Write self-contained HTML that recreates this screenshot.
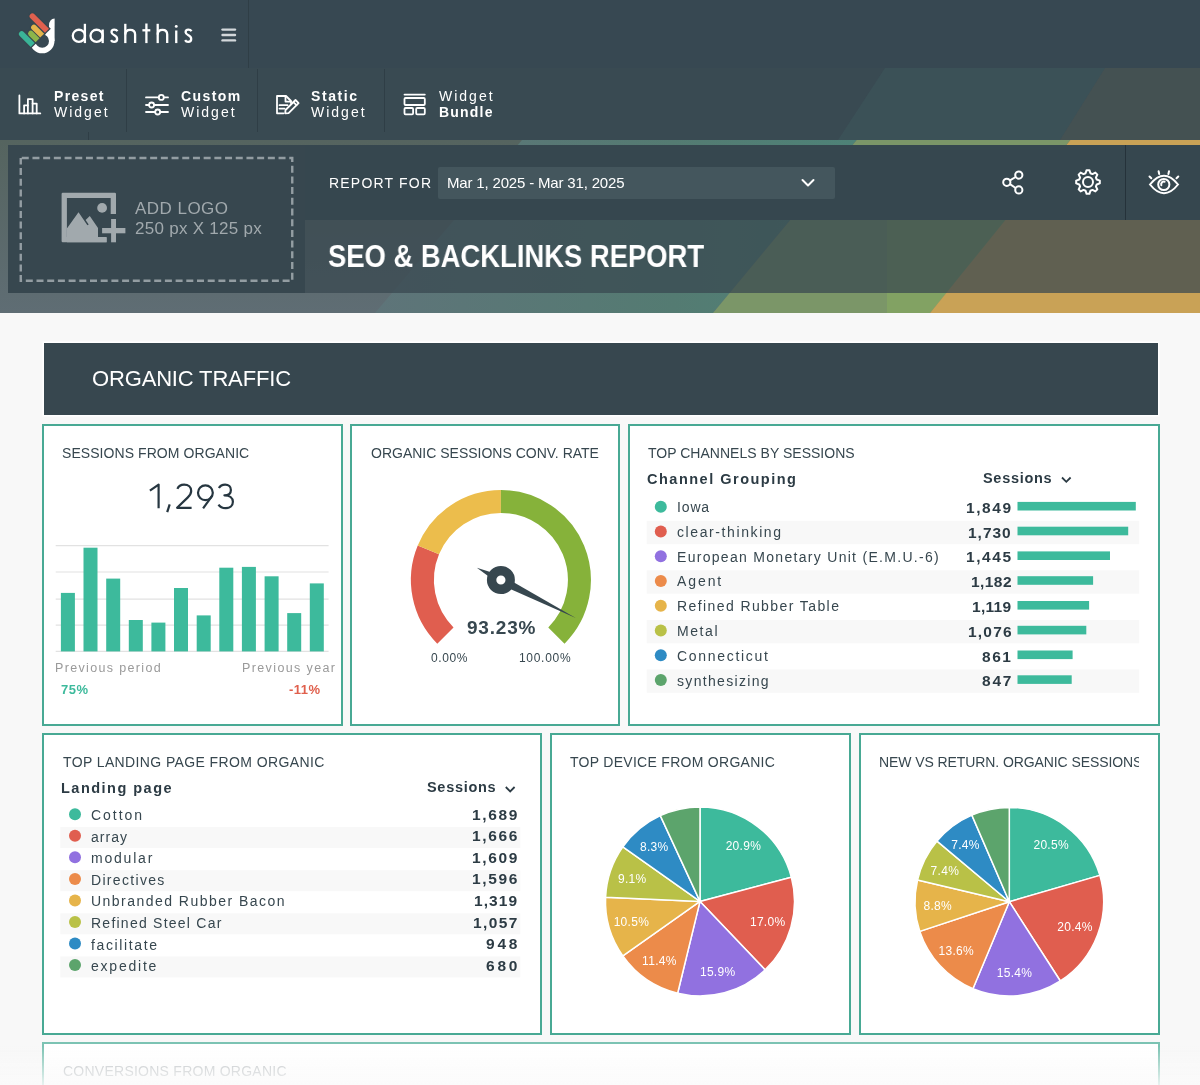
<!DOCTYPE html>
<html><head><meta charset="utf-8">
<style>
*{margin:0;padding:0;box-sizing:border-box}
html,body{width:1200px;height:1085px;overflow:hidden}
body{background:#f8f8f8;font-family:"Liberation Sans",sans-serif;position:relative;color:#37474f}
.abs{position:absolute}
.txt{position:absolute;white-space:nowrap;line-height:1;will-change:transform}
#banner{left:0;top:0;width:1200px;height:313px}
.nav1{left:0;top:0;width:1200px;height:68px;background:#374852}
.nav2{left:0;top:68px;width:1200px;height:72px;background:#394a52}
.vdiv{position:absolute;width:1px;background:#2f3e46}
.tb{color:#fff;font-size:14px}
.rep{left:8px;top:145px;width:1192px;height:75px;background:#36474f}
.logobox{left:8px;top:145px;width:297px;height:148px;background:#37474f}
.titlerow{left:305px;top:220px;width:895px;height:73px;background:rgba(55,71,79,0.72)}
.section{left:44px;top:343px;width:1114px;height:72px;background:#37474f;box-shadow:0 0 0 1.5px #fff}
.w{position:absolute;background:#fff;border:2px solid #48a994}
.wt{font-size:14px;color:#37474f;letter-spacing:0.2px}
</style></head><body>

<svg id="banner" class="abs" width="1200" height="313" viewBox="0 0 1200 313">
  <defs>
    <linearGradient id="gb" x1="0" y1="0" x2="0" y2="1">
      <stop offset="0" stop-color="#4e5e58"/>
      <stop offset="0.45" stop-color="#55645f"/>
      <stop offset="1" stop-color="#5f6d74"/>
    </linearGradient>
    <linearGradient id="gt" gradientUnits="userSpaceOnUse" x1="375" y1="0" x2="973" y2="0">
      <stop offset="0" stop-color="#5e7479"/>
      <stop offset="0.5" stop-color="#547b72"/>
      <stop offset="1" stop-color="#4a877b"/>
    </linearGradient>
  </defs>
  <rect x="0" y="0" width="1200" height="313" fill="url(#gb)"/>
  <polygon points="641,0 973,0 713,313 375,313" fill="url(#gt)"/>
  <polygon points="973,0 1184,0 930,313 713,313" fill="#7b9668"/>
  <polygon points="887,200 1024,200 930,313 887,313" fill="#82a263"/>
  <polygon points="1184,0 1500,0 1500,313 930,313" fill="#c9a256"/>
</svg>

<div class="abs nav1"></div>
<div class="abs nav2"></div>
<svg class="abs" style="left:0;top:68px" width="1200" height="72" viewBox="0 68 1200 72"><polygon points="885,68 1105,68 1060,140 838,140" fill="rgba(74,135,123,0.13)"/><polygon points="1105,68 1200,68 1200,140 1060,140" fill="rgba(201,162,86,0.08)"/></svg>
<div class="abs rep"></div>
<div class="abs logobox"></div>
<div class="abs titlerow"></div>

<!-- top nav -->
<svg class="abs" style="left:14px;top:8px" width="46" height="50" viewBox="14 8 46 50">
<circle cx="42.20" cy="41.00" r="9.55" stroke="#fff" stroke-width="5.50" fill="none"/>
<path d="M49 41 V25.5 Q49.2 18.6 54.6 18.4 V41 Z" fill="#fff"/>
<path d="M35.33 13.32 L50.81 28.81 L45.01 34.61 L29.53 19.12 A4.10 4.10 0 0 1 35.33 13.32 Z" fill="#37474f"/>
<path d="M36.84 24.54 L45.96 33.66 L40.16 39.46 L31.04 30.33 A4.10 4.10 0 0 1 36.84 24.54 Z" fill="#37474f"/>
<path d="M33.68 30.53 L41.39 38.23 L35.59 44.03 L27.88 36.32 A4.10 4.10 0 0 1 33.68 30.53 Z" fill="#37474f"/>
<path d="M24.61 31.11 L36.56 43.06 L30.76 48.86 L18.81 36.91 A4.10 4.10 0 0 1 24.61 31.11 Z" fill="#37474f"/>
<path d="M34.41 14.24 L48.97 28.81 L45.01 32.77 L30.45 18.20 A2.80 2.80 0 0 1 34.41 14.24 Z" fill="#e0604e"/>
<path d="M35.92 25.46 L44.12 33.66 L40.16 37.62 L31.96 29.42 A2.80 2.80 0 0 1 35.92 25.46 Z" fill="#e3b44b"/>
<path d="M32.76 31.45 L39.55 38.23 L35.59 42.19 L28.80 35.40 A2.80 2.80 0 0 1 32.76 31.45 Z" fill="#8db54a"/>
<path d="M23.69 32.03 L34.72 43.06 L30.76 47.02 L19.73 35.99 A2.80 2.80 0 0 1 23.69 32.03 Z" fill="#3ab497"/>
</svg>
<svg class="abs" style="left:66px;top:18px" width="132" height="30" viewBox="66 18 132 30">
<g stroke="#fff" stroke-width="2.3" fill="none">
<circle cx="78.9" cy="35.85" r="6.1"/><line x1="84.9" y1="23.8" x2="84.9" y2="43.1"/>
<circle cx="96.6" cy="35.85" r="6.1"/><line x1="102.7" y1="29.5" x2="102.7" y2="43.1"/>
<path d="M 117.40 31.20 C 116.80 30.10 115.70 29.70 114.30 29.70 C 112.60 29.70 111.50 30.70 111.50 32.20 C 111.50 33.80 112.90 34.50 114.40 35.30 C 116.10 36.20 117.10 37.20 117.10 39.10 C 117.10 40.90 115.80 41.90 114.10 41.90 C 112.70 41.90 111.60 41.20 111.00 40.10"/>
<line x1="125.3" y1="23.8" x2="125.3" y2="43.1"/><path d="M125.3 34.5 C125.3 31.3 127.3 29.8 130.2 29.8 C133.1 29.8 135.1 31.5 135.1 34.6 V43.1"/>
<line x1="146.4" y1="23.5" x2="146.4" y2="43.1"/><line x1="142.4" y1="30.3" x2="150.3" y2="30.3"/>
<line x1="157.7" y1="23.8" x2="157.7" y2="43.1"/><path d="M157.7 34.5 C157.7 31.3 159.7 29.8 162.5 29.8 C165.3 29.8 167.2 31.5 167.2 34.6 V43.1"/>
<line x1="176.25" y1="30.5" x2="176.25" y2="43.1"/>
<path d="M 191.50 31.20 C 190.90 30.10 189.80 29.70 188.40 29.70 C 186.70 29.70 185.60 30.70 185.60 32.20 C 185.60 33.80 187.00 34.50 188.50 35.30 C 190.20 36.20 191.20 37.20 191.20 39.10 C 191.20 40.90 189.90 41.90 188.20 41.90 C 186.80 41.90 185.70 41.20 185.10 40.10"/>
</g>
<circle cx="176.25" cy="26.4" r="1.45" fill="#fff"/>
</svg>
<svg class="abs" style="left:221px;top:28px" width="16" height="15" viewBox="0 0 16 15">
  <g stroke="#d3d8db" stroke-width="2.4" stroke-linecap="round"><line x1="1.5" y1="1.6" x2="14" y2="1.6"/><line x1="1.5" y1="7" x2="14" y2="7"/><line x1="1.5" y1="12.4" x2="14" y2="12.4"/></g>
</svg>
<div class="vdiv" style="left:248px;top:0;height:68px"></div>

<!-- toolbar -->
<svg class="abs" style="left:16px;top:92px" width="28" height="26" viewBox="16 92 28 26">
  <g stroke="#fff" stroke-width="1.8" fill="none" stroke-linecap="round" stroke-linejoin="round">
    <path d="M19.4 95.4 V113.4 H40.3"/>
    <path d="M24.1 113.4 V105.3 H27.9 V113.4"/>
    <path d="M27.9 105.3 V99.2 H32.6 V113.4"/>
    <path d="M32.6 103.6 H36.7 V113.4"/>
  </g>
</svg>
<div class="txt tb" style="left:53.5px;top:88.5px;font-weight:bold;letter-spacing:1.34px">Preset</div>
<div class="txt tb" style="left:53.7px;top:104.7px;letter-spacing:2px">Widget</div>
<div class="vdiv" style="left:126px;top:69px;height:63px"></div>
<div class="vdiv" style="left:88px;top:132px;height:8px"></div>

<svg class="abs" style="left:142px;top:90px" width="30" height="26" viewBox="142 90 30 26">
  <g stroke="#fff" stroke-width="1.8" fill="none" stroke-linecap="round">
    <line x1="146" y1="97.4" x2="158.8" y2="97.4"/><line x1="163.8" y1="97.4" x2="168" y2="97.4"/>
    <circle cx="161.3" cy="97.4" r="2.5"/>
    <line x1="146" y1="105" x2="149.1" y2="105"/><line x1="154.1" y1="105" x2="168" y2="105"/>
    <circle cx="151.6" cy="105" r="2.5"/>
    <line x1="146" y1="112" x2="155.2" y2="112"/><line x1="160.2" y1="112" x2="168" y2="112"/>
    <circle cx="157.7" cy="112" r="2.5"/>
  </g>
</svg>
<div class="txt tb" style="left:180.5px;top:88.5px;font-weight:bold;letter-spacing:1.4px">Custom</div>
<div class="txt tb" style="left:181px;top:104.7px;letter-spacing:2px">Widget</div>
<div class="vdiv" style="left:257px;top:69px;height:63px"></div>

<svg class="abs" style="left:272px;top:90px" width="32" height="28" viewBox="272 90 32 28">
  <g stroke="#fff" stroke-width="1.8" fill="none" stroke-linejoin="round" stroke-linecap="round">
    <path d="M283.5 113.3 H277 V96 H286 L291 101 V103"/>
    <path d="M285.5 96.2 V101.6 H290.8"/>
    <line x1="279.5" y1="105.2" x2="287.5" y2="105.2"/>
    <line x1="279.5" y1="108.6" x2="284.5" y2="108.6"/>
    <path d="M285.2 113.4 L285.5 110 L295.5 100 L298.6 103.1 L288.6 113.1 Z"/>
    <line x1="293.4" y1="102.1" x2="296.5" y2="105.2"/>
  </g>
</svg>
<div class="txt tb" style="left:311px;top:88.5px;font-weight:bold;letter-spacing:1.6px">Static</div>
<div class="txt tb" style="left:311px;top:104.7px;letter-spacing:2px">Widget</div>
<div class="vdiv" style="left:384px;top:69px;height:63px"></div>

<svg class="abs" style="left:400px;top:90px" width="30" height="28" viewBox="400 90 30 28">
  <g stroke="#fff" stroke-width="1.8" fill="none" stroke-linecap="round" stroke-linejoin="round">
    <line x1="404.5" y1="94.6" x2="424.8" y2="94.6"/>
    <rect x="404.5" y="98" width="20.3" height="7" rx="1"/>
    <rect x="404.5" y="108" width="8.6" height="6.3" rx="1"/>
    <rect x="416.2" y="108" width="8.6" height="6.3" rx="1"/>
  </g>
</svg>
<div class="txt tb" style="left:438.5px;top:89px;letter-spacing:2px">Widget</div>
<div class="txt tb" style="left:438.5px;top:104.7px;font-weight:bold;letter-spacing:1.2px">Bundle</div>

<!-- report header -->
<svg class="abs" style="left:0;top:140px" width="310" height="160" viewBox="0 140 310 160"><rect x="20.75" y="158" width="271.5" height="122.75" fill="none" stroke="#939da2" stroke-width="2.4" stroke-dasharray="7 3.7" stroke-dashoffset="-1"/></svg>
<svg class="abs" style="left:58px;top:188px" width="72" height="58" viewBox="58 188 72 58">
  <g fill="#a1a9ad">
    <path d="M61.6 194 Q61.6 192.8 62.8 192.8 H114.8 Q116 192.8 116 194 V214 H110.7 V198.1 H66.9 V237 H106.6 V242.3 H62.8 Q61.6 242.3 61.6 241.1 Z"/>
    <circle cx="102.1" cy="207.9" r="4.9"/>
    <path d="M66.9 228.4 L78.5 212.3 L87.4 225.2 L88.7 224.4 L85.6 219.9 L89.8 216 L98 228 V237.5 H106.6 V242.3 H66.9 Z"/>
    <rect x="111.1" y="219" width="4.9" height="23.3"/>
    <rect x="102.1" y="228" width="23.3" height="5.3"/>
  </g>
</svg>
<div class="txt" style="left:135px;top:200px;font-size:17px;color:#a1a9ad;letter-spacing:0.47px">ADD LOGO</div>
<div class="txt" style="left:134.5px;top:219.5px;font-size:17px;color:#a1a9ad;letter-spacing:0.27px">250 px X 125 px</div>

<div class="txt" style="left:329px;top:176px;font-size:14px;color:#fff;letter-spacing:1.2px">REPORT FOR</div>
<div class="abs" style="left:438px;top:167px;width:397px;height:32px;background:#44565d;border-radius:2px"></div>
<div class="txt" style="left:446.5px;top:175px;font-size:15px;color:#fff;letter-spacing:-0.17px">Mar 1, 2025 - Mar 31, 2025</div>
<svg class="abs" style="left:800px;top:176px" width="16" height="14" viewBox="0 0 16 14"><path d="M2.5 4 L8 9.5 L13.5 4" stroke="#fff" stroke-width="2" fill="none" stroke-linecap="round" stroke-linejoin="round"/></svg>

<svg class="abs" style="left:995px;top:165px" width="35" height="35" viewBox="995 165 35 35">
  <g stroke="#fff" stroke-width="2" fill="none">
    <circle cx="1006.8" cy="182.3" r="3.6"/>
    <circle cx="1018.8" cy="175.1" r="3.6"/>
    <circle cx="1018.8" cy="189.9" r="3.6"/>
    <line x1="1010" y1="180.4" x2="1015.6" y2="177"/>
    <line x1="1010" y1="184.2" x2="1015.6" y2="188"/>
  </g>
</svg>
<svg class="abs" style="left:1066.7px;top:161.3px" width="42" height="42" viewBox="-21 -21 42 42">
  <g stroke="#fff" stroke-width="2" fill="none" stroke-linejoin="round">
    <path d="M-2.43 -8.77 L-1.42 -11.81 L1.42 -11.81 L2.43 -8.77 L4.49 -7.92 L7.35 -9.36 L9.36 -7.35 L7.92 -4.49 L8.77 -2.43 L11.81 -1.42 L11.81 1.42 L8.77 2.43 L7.92 4.49 L9.36 7.35 L7.35 9.36 L4.49 7.92 L2.43 8.77 L1.42 11.81 L-1.42 11.81 L-2.43 8.77 L-4.49 7.92 L-7.35 9.36 L-9.36 7.35 L-7.92 4.49 L-8.77 2.43 L-11.81 1.42 L-11.81 -1.42 L-8.77 -2.43 L-7.92 -4.49 L-9.36 -7.35 L-7.35 -9.36 L-4.49 -7.92 Z"/>
    <circle cx="0" cy="0" r="5"/>
  </g>
</svg>
<div class="vdiv" style="left:1125px;top:145px;height:75px;background:#25323a"></div>
<svg class="abs" style="left:1145px;top:168px" width="38" height="30" viewBox="1145 168 38 30">
  <g stroke="#fff" stroke-width="2" fill="none" stroke-linecap="round">
    <path d="M1150 184.5 Q1164 167 1178 184.5 Q1164 202 1150 184.5 Z"/>
    <circle cx="1163.8" cy="184.5" r="5.6"/>
    <path d="M1161.3 185.3 A2.8 2.8 0 0 1 1164.6 181.7"/>
    <line x1="1158.6" y1="171.3" x2="1159.2" y2="174"/>
    <line x1="1169" y1="171.3" x2="1168.4" y2="174"/>
    <line x1="1149.5" y1="176.5" x2="1151.3" y2="178.3"/>
    <line x1="1178.3" y1="176.5" x2="1176.5" y2="178.3"/>
  </g>
</svg>

<div class="txt" style="left:327.5px;top:241.2px;font-size:31.5px;color:#fff;font-weight:bold;transform:scaleX(0.87);transform-origin:0 0">SEO &amp; BACKLINKS REPORT</div>

<div class="abs section"></div>
<div class="txt" style="left:92px;top:367.5px;font-size:22px;color:#fff;letter-spacing:-0.16px">ORGANIC TRAFFIC</div>

<!--WIDGETS-->
<div class="w" style="left:42px;top:424px;width:301px;height:302px"></div>
<div class="w" style="left:350px;top:424px;width:270px;height:302px"></div>
<div class="w" style="left:628px;top:424px;width:532px;height:302px"></div>
<div class="w" style="left:42px;top:733px;width:500px;height:302px"></div>
<div class="w" style="left:550px;top:733px;width:301px;height:302px"></div>
<div class="w" style="left:859px;top:733px;width:301px;height:302px"></div>
<svg class="abs" style="left:0;top:0" width="1200" height="1085" viewBox="0 0 1200 1085">
<line x1="55.7" y1="545.7" x2="328.6" y2="545.7" stroke="#e2e2e2" stroke-width="1.2"/>
<line x1="55.7" y1="572.0" x2="328.6" y2="572.0" stroke="#e2e2e2" stroke-width="1.2"/>
<line x1="55.7" y1="599.1" x2="328.6" y2="599.1" stroke="#e2e2e2" stroke-width="1.2"/>
<line x1="55.7" y1="625.1" x2="328.6" y2="625.1" stroke="#e2e2e2" stroke-width="1.2"/>
<line x1="55.7" y1="651.4" x2="328.6" y2="651.4" stroke="#e2e2e2" stroke-width="1.2"/>
<rect x="60.9" y="592.9" width="14" height="58.5" fill="#3dba9c"/>
<rect x="83.5" y="547.7" width="14" height="103.7" fill="#3dba9c"/>
<rect x="106.2" y="578.6" width="14" height="72.8" fill="#3dba9c"/>
<rect x="128.8" y="620.0" width="14" height="31.4" fill="#3dba9c"/>
<rect x="151.4" y="622.6" width="14" height="28.8" fill="#3dba9c"/>
<rect x="174.0" y="588.0" width="14" height="63.4" fill="#3dba9c"/>
<rect x="196.7" y="615.4" width="14" height="36.0" fill="#3dba9c"/>
<rect x="219.3" y="567.7" width="14" height="83.7" fill="#3dba9c"/>
<rect x="241.9" y="566.9" width="14" height="84.5" fill="#3dba9c"/>
<rect x="264.6" y="576.3" width="14" height="75.1" fill="#3dba9c"/>
<rect x="287.2" y="613.1" width="14" height="38.3" fill="#3dba9c"/>
<rect x="309.8" y="583.4" width="14" height="68.0" fill="#3dba9c"/>
<path d="M445.39 635.51 A78.50 78.50 0 0 1 428.38 549.96" stroke="#e05e4f" stroke-width="23" fill="none"/>
<path d="M428.38 549.96 A78.50 78.50 0 0 1 500.90 501.50" stroke="#ecbd4c" stroke-width="23" fill="none"/>
<path d="M500.90 501.50 A78.50 78.50 0 0 1 556.41 635.51" stroke="#86b23a" stroke-width="23" fill="none"/>
<path d="M476.83 567.77 L498.91 583.92 L575.79 618.04 L502.89 576.08 Z" fill="#37474f"/>
<circle cx="500.9" cy="580.0" r="9.3" stroke="#37474f" stroke-width="9.4" fill="#fff"/>
<path d="M1062 477.5 L1066.3 481.8 L1070.6 477.5" stroke="#2c3b44" stroke-width="1.8" fill="none"/>
<circle cx="660.8" cy="506.7" r="6" fill="#3dba9c"/>
<rect x="1017.5" y="501.9" width="118.3" height="8.6" fill="#3dba9c"/>
<rect x="646.7" y="520.8" width="492.5" height="23.4" fill="#f8f8f8"/>
<circle cx="660.8" cy="531.5" r="6" fill="#e05e4f"/>
<rect x="1017.5" y="526.7" width="110.7" height="8.6" fill="#3dba9c"/>
<circle cx="660.8" cy="556.2" r="6" fill="#9171e0"/>
<rect x="1017.5" y="551.4" width="92.5" height="8.6" fill="#3dba9c"/>
<rect x="646.7" y="570.3" width="492.5" height="23.4" fill="#f8f8f8"/>
<circle cx="660.8" cy="581.0" r="6" fill="#ec8b4a"/>
<rect x="1017.5" y="576.2" width="75.6" height="8.6" fill="#3dba9c"/>
<circle cx="660.8" cy="605.8" r="6" fill="#e6b44a"/>
<rect x="1017.5" y="601.0" width="71.6" height="8.6" fill="#3dba9c"/>
<rect x="646.7" y="619.9" width="492.5" height="23.4" fill="#f8f8f8"/>
<circle cx="660.8" cy="630.5" r="6" fill="#b9c147"/>
<rect x="1017.5" y="625.8" width="68.8" height="8.6" fill="#3dba9c"/>
<circle cx="660.8" cy="655.3" r="6" fill="#2e8bc4"/>
<rect x="1017.5" y="650.5" width="55.1" height="8.6" fill="#3dba9c"/>
<rect x="646.7" y="669.4" width="492.5" height="23.4" fill="#f8f8f8"/>
<circle cx="660.8" cy="680.1" r="6" fill="#5ca46c"/>
<rect x="1017.5" y="675.3" width="54.2" height="8.6" fill="#3dba9c"/>
<path d="M505.8 787 L510.2 791.4 L514.6 787" stroke="#2c3b44" stroke-width="1.8" fill="none"/>
<circle cx="75" cy="814.2" r="6" fill="#3dba9c"/>
<rect x="60.3" y="827.1" width="460" height="21" fill="#f8f8f8"/>
<circle cx="75" cy="835.8" r="6" fill="#e05e4f"/>
<circle cx="75" cy="857.3" r="6" fill="#9171e0"/>
<rect x="60.3" y="870.2" width="460" height="21" fill="#f8f8f8"/>
<circle cx="75" cy="878.9" r="6" fill="#ec8b4a"/>
<circle cx="75" cy="900.4" r="6" fill="#e6b44a"/>
<rect x="60.3" y="913.3" width="460" height="21" fill="#f8f8f8"/>
<circle cx="75" cy="922.0" r="6" fill="#b9c147"/>
<circle cx="75" cy="943.6" r="6" fill="#2e8bc4"/>
<rect x="60.3" y="956.4" width="460" height="21" fill="#f8f8f8"/>
<circle cx="75" cy="965.1" r="6" fill="#5ca46c"/>
<path d="M700.00 901.40 L700.00 806.90 A94.50 94.50 0 0 1 791.38 877.32 Z" fill="#3dba9c" stroke="#fff" stroke-width="1.5" stroke-linejoin="round"/>
<path d="M700.00 901.40 L791.38 877.32 A94.50 94.50 0 0 1 765.12 969.88 Z" fill="#e05e4f" stroke="#fff" stroke-width="1.5" stroke-linejoin="round"/>
<path d="M700.00 901.40 L765.12 969.88 A94.50 94.50 0 0 1 677.65 993.22 Z" fill="#9171e0" stroke="#fff" stroke-width="1.5" stroke-linejoin="round"/>
<path d="M700.00 901.40 L677.65 993.22 A94.50 94.50 0 0 1 622.86 955.98 Z" fill="#ec8b4a" stroke="#fff" stroke-width="1.5" stroke-linejoin="round"/>
<path d="M700.00 901.40 L622.86 955.98 A94.50 94.50 0 0 1 605.59 897.25 Z" fill="#e6b44a" stroke="#fff" stroke-width="1.5" stroke-linejoin="round"/>
<path d="M700.00 901.40 L605.59 897.25 A94.50 94.50 0 0 1 622.86 846.82 Z" fill="#b9c147" stroke="#fff" stroke-width="1.5" stroke-linejoin="round"/>
<path d="M700.00 901.40 L622.86 846.82 A94.50 94.50 0 0 1 660.30 815.64 Z" fill="#2e8bc4" stroke="#fff" stroke-width="1.5" stroke-linejoin="round"/>
<path d="M700.00 901.40 L660.30 815.64 A94.50 94.50 0 0 1 700.00 806.90 Z" fill="#5ca46c" stroke="#fff" stroke-width="1.5" stroke-linejoin="round"/>
<text x="743.4" y="850.0" text-anchor="middle" font-family="Liberation Sans" font-size="12" fill="#fff" letter-spacing="0.3">20.9%</text>
<text x="767.7" y="925.7" text-anchor="middle" font-family="Liberation Sans" font-size="12" fill="#fff" letter-spacing="0.3">17.0%</text>
<text x="717.7" y="975.7" text-anchor="middle" font-family="Liberation Sans" font-size="12" fill="#fff" letter-spacing="0.3">15.9%</text>
<text x="659.4" y="965.2" text-anchor="middle" font-family="Liberation Sans" font-size="12" fill="#fff" letter-spacing="0.3">11.4%</text>
<text x="631.4" y="925.7" text-anchor="middle" font-family="Liberation Sans" font-size="12" fill="#fff" letter-spacing="0.3">10.5%</text>
<text x="632.3" y="882.9" text-anchor="middle" font-family="Liberation Sans" font-size="12" fill="#fff" letter-spacing="0.3">9.1%</text>
<text x="654.3" y="850.9" text-anchor="middle" font-family="Liberation Sans" font-size="12" fill="#fff" letter-spacing="0.3">8.3%</text>
<path d="M1009.30 901.70 L1009.30 807.40 A94.30 94.30 0 0 1 1099.86 875.39 Z" fill="#3dba9c" stroke="#fff" stroke-width="1.5" stroke-linejoin="round"/>
<path d="M1009.30 901.70 L1099.86 875.39 A94.30 94.30 0 0 1 1060.33 981.00 Z" fill="#e05e4f" stroke="#fff" stroke-width="1.5" stroke-linejoin="round"/>
<path d="M1009.30 901.70 L1060.33 981.00 A94.30 94.30 0 0 1 972.94 988.71 Z" fill="#9171e0" stroke="#fff" stroke-width="1.5" stroke-linejoin="round"/>
<path d="M1009.30 901.70 L972.94 988.71 A94.30 94.30 0 0 1 919.80 931.40 Z" fill="#ec8b4a" stroke="#fff" stroke-width="1.5" stroke-linejoin="round"/>
<path d="M1009.30 901.70 L919.80 931.40 A94.30 94.30 0 0 1 917.54 879.97 Z" fill="#e6b44a" stroke="#fff" stroke-width="1.5" stroke-linejoin="round"/>
<path d="M1009.30 901.70 L917.54 879.97 A94.30 94.30 0 0 1 937.02 841.14 Z" fill="#b9c147" stroke="#fff" stroke-width="1.5" stroke-linejoin="round"/>
<path d="M1009.30 901.70 L937.02 841.14 A94.30 94.30 0 0 1 971.85 815.16 Z" fill="#2e8bc4" stroke="#fff" stroke-width="1.5" stroke-linejoin="round"/>
<path d="M1009.30 901.70 L971.85 815.16 A94.30 94.30 0 0 1 1009.30 807.40 Z" fill="#5ca46c" stroke="#fff" stroke-width="1.5" stroke-linejoin="round"/>
<text x="1051.2" y="849.4" text-anchor="middle" font-family="Liberation Sans" font-size="12" fill="#fff" letter-spacing="0.3">20.5%</text>
<text x="1075.0" y="931.2" text-anchor="middle" font-family="Liberation Sans" font-size="12" fill="#fff" letter-spacing="0.3">20.4%</text>
<text x="1014.5" y="977.3" text-anchor="middle" font-family="Liberation Sans" font-size="12" fill="#fff" letter-spacing="0.3">15.4%</text>
<text x="956.3" y="955.4" text-anchor="middle" font-family="Liberation Sans" font-size="12" fill="#fff" letter-spacing="0.3">13.6%</text>
<text x="937.7" y="910.0" text-anchor="middle" font-family="Liberation Sans" font-size="12" fill="#fff" letter-spacing="0.3">8.8%</text>
<text x="944.9" y="875.0" text-anchor="middle" font-family="Liberation Sans" font-size="12" fill="#fff" letter-spacing="0.3">7.4%</text>
<text x="965.5" y="848.8" text-anchor="middle" font-family="Liberation Sans" font-size="12" fill="#fff" letter-spacing="0.3">7.4%</text>
</svg>
<div class="txt" style="left:62.00px;top:445.65px;font-size:14px;color:#37474f;letter-spacing:0.066px;">SESSIONS FROM ORGANIC</div>
<svg class="abs" style="left:140px;top:478px" width="100" height="40" viewBox="140 478 100 40"><g stroke="#263640" stroke-width="2.2" fill="none" stroke-linejoin="round"><path d="M149.9 490.6 L158.6 484.6 V508.2"/><path d="M169.7 504.3 L167.2 512.2"/><path d="M177.4 488.8 C178.5 486 180.9 484.6 184.1 484.6 C188.4 484.6 191.2 487.2 191.2 490.9 C191.2 493.5 189.9 495.3 187.6 497.6 L177.1 507.8 H191.6"/><circle cx="205.4" cy="492.7" r="7.4"/><path d="M212.3 495.6 L203.1 508.3"/><path d="M218.9 488.1 C220.1 485.8 222.2 484.6 225.1 484.6 C228.7 484.6 230.9 486.8 230.9 489.9 C230.9 493.3 228.3 495.3 224.4 495.3 C229.6 495.3 232.9 497.9 232.9 501.7 C232.9 505.6 229.9 508.2 225.7 508.2 C222.4 508.2 219.9 506.9 218.5 504.6"/></g></svg>
<div class="txt" style="left:54.5px;top:661.5px;font-size:12.5px;color:#9a9a9a;letter-spacing:1.35px">Previous period</div>
<div class="txt" style="left:241.5px;top:661.5px;font-size:12.5px;color:#9a9a9a;letter-spacing:1.38px">Previous year</div>
<div class="txt" style="left:61.0px;top:683.0px;font-size:13px;color:#3dba9c;font-weight:bold;letter-spacing:0.5px">75%</div>
<div class="txt" style="left:289.0px;top:683.0px;font-size:13px;color:#e0604d;font-weight:bold;letter-spacing:0.5px">-11%</div>
<div class="txt" style="left:371.00px;top:445.65px;font-size:14px;color:#37474f;letter-spacing:0.000px;">ORGANIC SESSIONS CONV. RATE</div>
<div class="txt" style="left:467.0px;top:618.0px;font-size:19px;color:#37474f;font-weight:bold;letter-spacing:0.8px">93.23%</div>
<div class="txt" style="left:431.0px;top:651.5px;font-size:12px;color:#37474f;letter-spacing:0.6px">0.00%</div>
<div class="txt" style="left:518.5px;top:651.5px;font-size:12px;color:#37474f;letter-spacing:0.7px">100.00%</div>
<div class="txt" style="left:648.40px;top:445.65px;font-size:14px;color:#37474f;letter-spacing:0.020px;">TOP CHANNELS BY SESSIONS</div>
<div class="txt" style="left:646.5px;top:472.0px;font-size:14.5px;color:#2c3b44;font-weight:bold;letter-spacing:1.5px">Channel Grouping</div>
<div class="txt" style="left:983.0px;top:471.0px;font-size:14.5px;color:#2c3b44;font-weight:bold;letter-spacing:0.7px">Sessions</div>
<div class="txt" style="left:677.30px;top:500.15px;font-size:14px;color:#37474f;letter-spacing:0.858px;">Iowa</div>
<div class="txt" style="left:966.10px;top:499.88px;font-size:15.5px;color:#2c3b44;letter-spacing:1.562px;font-weight:bold;">1,849</div>
<div class="txt" style="left:677.30px;top:524.92px;font-size:14px;color:#37474f;letter-spacing:1.596px;">clear-thinking</div>
<div class="txt" style="left:968.40px;top:524.65px;font-size:15.5px;color:#2c3b44;letter-spacing:0.988px;font-weight:bold;">1,730</div>
<div class="txt" style="left:677.30px;top:549.69px;font-size:14px;color:#37474f;letter-spacing:1.298px;">European Monetary Unit (E.M.U.-6)</div>
<div class="txt" style="left:966.10px;top:549.42px;font-size:15.5px;color:#2c3b44;letter-spacing:1.562px;font-weight:bold;">1,445</div>
<div class="txt" style="left:677.30px;top:574.46px;font-size:14px;color:#37474f;letter-spacing:1.919px;">Agent</div>
<div class="txt" style="left:970.60px;top:574.19px;font-size:15.5px;color:#2c3b44;letter-spacing:0.438px;font-weight:bold;">1,182</div>
<div class="txt" style="left:677.30px;top:599.23px;font-size:14px;color:#37474f;letter-spacing:1.408px;">Refined Rubber Table</div>
<div class="txt" style="left:972.10px;top:598.96px;font-size:15.5px;color:#2c3b44;letter-spacing:0.281px;font-weight:bold;">1,119</div>
<div class="txt" style="left:677.30px;top:624.00px;font-size:14px;color:#37474f;letter-spacing:1.588px;">Metal</div>
<div class="txt" style="left:967.50px;top:623.73px;font-size:15.5px;color:#2c3b44;letter-spacing:1.213px;font-weight:bold;">1,076</div>
<div class="txt" style="left:677.30px;top:648.77px;font-size:14px;color:#37474f;letter-spacing:1.700px;">Connecticut</div>
<div class="txt" style="left:982.20px;top:648.50px;font-size:15.5px;color:#2c3b44;letter-spacing:1.512px;font-weight:bold;">861</div>
<div class="txt" style="left:677.30px;top:673.54px;font-size:14px;color:#37474f;letter-spacing:1.318px;">synthesizing</div>
<div class="txt" style="left:981.70px;top:673.27px;font-size:15.5px;color:#2c3b44;letter-spacing:1.762px;font-weight:bold;">847</div>
<div class="txt" style="left:62.50px;top:754.95px;font-size:14px;color:#37474f;letter-spacing:0.386px;">TOP LANDING PAGE FROM ORGANIC</div>
<div class="txt" style="left:60.7px;top:781.0px;font-size:14.5px;color:#2c3b44;font-weight:bold;letter-spacing:1.48px">Landing page</div>
<div class="txt" style="left:427.0px;top:780.0px;font-size:14.5px;color:#2c3b44;font-weight:bold;letter-spacing:0.7px">Sessions</div>
<div class="txt" style="left:91.00px;top:808.15px;font-size:14px;color:#37474f;letter-spacing:1.950px;">Cotton</div>
<div class="txt" style="left:471.90px;top:806.78px;font-size:15.5px;color:#2c3b44;letter-spacing:1.637px;font-weight:bold;">1,689</div>
<div class="txt" style="left:91.00px;top:829.71px;font-size:14px;color:#37474f;letter-spacing:1.031px;">array</div>
<div class="txt" style="left:471.90px;top:828.34px;font-size:15.5px;color:#2c3b44;letter-spacing:1.637px;font-weight:bold;">1,666</div>
<div class="txt" style="left:91.00px;top:851.27px;font-size:14px;color:#37474f;letter-spacing:1.796px;">modular</div>
<div class="txt" style="left:471.90px;top:849.90px;font-size:15.5px;color:#2c3b44;letter-spacing:1.637px;font-weight:bold;">1,609</div>
<div class="txt" style="left:91.00px;top:872.83px;font-size:14px;color:#37474f;letter-spacing:1.322px;">Directives</div>
<div class="txt" style="left:471.90px;top:871.46px;font-size:15.5px;color:#2c3b44;letter-spacing:1.637px;font-weight:bold;">1,596</div>
<div class="txt" style="left:91.00px;top:894.39px;font-size:14px;color:#37474f;letter-spacing:1.465px;">Unbranded Rubber Bacon</div>
<div class="txt" style="left:474.10px;top:893.02px;font-size:15.5px;color:#2c3b44;letter-spacing:1.088px;font-weight:bold;">1,319</div>
<div class="txt" style="left:91.00px;top:915.95px;font-size:14px;color:#37474f;letter-spacing:1.244px;">Refined Steel Car</div>
<div class="txt" style="left:472.90px;top:914.58px;font-size:15.5px;color:#2c3b44;letter-spacing:1.387px;font-weight:bold;">1,057</div>
<div class="txt" style="left:91.00px;top:937.51px;font-size:14px;color:#37474f;letter-spacing:1.625px;">facilitate</div>
<div class="txt" style="left:485.70px;top:936.14px;font-size:15.5px;color:#2c3b44;letter-spacing:2.812px;font-weight:bold;">948</div>
<div class="txt" style="left:91.00px;top:959.07px;font-size:14px;color:#37474f;letter-spacing:1.771px;">expedite</div>
<div class="txt" style="left:485.70px;top:957.70px;font-size:15.5px;color:#2c3b44;letter-spacing:2.812px;font-weight:bold;">680</div>
<div class="txt" style="left:570.00px;top:754.95px;font-size:14px;color:#37474f;letter-spacing:0.285px;">TOP DEVICE FROM ORGANIC</div>
<div class="txt" style="left:879.3px;top:754.95px;width:260.2px;overflow:hidden;font-size:14px;color:#37474f;letter-spacing:-0.088px">NEW VS RETURN. ORGANIC SESSIONS</div>
<div class="w" style="left:42px;top:1042px;width:1118px;height:120px;border-color:#7cc3b3"></div>
<div class="txt" style="left:62.50px;top:1064.15px;font-size:14px;color:#b9bec1;letter-spacing:0.250px;">CONVERSIONS FROM ORGANIC</div>
<div class="abs" style="left:0;top:1046px;width:1200px;height:39px;background:linear-gradient(to bottom,rgba(250,250,250,0.0),rgba(250,250,250,0.85))"></div>
<!--/WIDGETS-->
</body></html>
